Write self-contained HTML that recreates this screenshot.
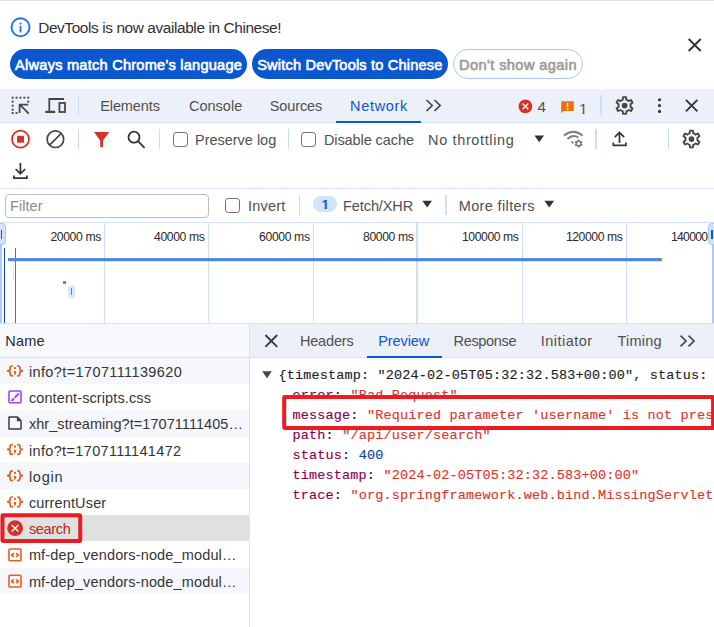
<!DOCTYPE html>
<html lang="en"><head><meta charset="utf-8"><title>DevTools - Network</title>
<style>
html,body{margin:0;padding:0;background:#fff;}
body{width:714px;height:627px;overflow:hidden;font-family:"Liberation Sans",sans-serif;}
#root{position:relative;width:714px;height:627px;overflow:hidden;background:#fff;}
#root>*{position:absolute;}
.t{white-space:pre;line-height:20px;display:block;}
.ln{background:#d3e3fd;}
.m{font-family:"Liberation Mono",monospace;font-size:13.5px;letter-spacing:0.15px;white-space:pre;line-height:20px;-webkit-text-stroke:0.15px;}
.k{color:#8e004b}.s{color:#dc362e}.n{color:#0842a0}.d{color:#1f1f1f}
.cb{box-sizing:border-box;border:1.6px solid #707070;border-radius:3.2px;background:#fff;}
svg{overflow:visible}

</style></head>
<body>
<div id="root">
<!-- ===== backgrounds & rules ===== -->
<div style="left:0;top:0;width:714px;height:1.2px;background:#dde0de"></div>
<div style="left:0;top:89px;width:714px;height:33px;background:#ecf0f8"></div>
<div class="ln" style="left:0;top:122px;width:714px;height:1px"></div>
<div class="ln" style="left:0;top:188px;width:714px;height:1px"></div>
<div class="ln" style="left:0;top:222px;width:714px;height:1px"></div>
<div class="ln" style="left:0;top:323px;width:714px;height:1px"></div>
<!-- infobar buttons -->
<div style="left:10px;top:49px;width:236.5px;height:30px;border-radius:15px;background:#0b57d0"></div>
<div style="left:252px;top:49px;width:196px;height:30px;border-radius:15px;background:#0b57d0"></div>
<div style="left:453px;top:49px;width:130px;height:30px;border-radius:15px;box-sizing:border-box;border:1px solid #a8c7fa;background:#fff"></div>
<!-- main tab underline -->
<div style="left:336px;top:120.9px;width:85px;height:2.1px;background:#0b58d6"></div>
<!-- toolbar dividers -->
<div style="left:78px;top:95.5px;width:1px;height:19px;background:#c7daf7"></div>
<div style="left:600px;top:95px;width:2px;height:19.5px;background:#cddefb"></div>
<div style="left:78px;top:129px;width:1px;height:19.5px;background:#c7daf7"></div>
<div style="left:159px;top:129px;width:1px;height:19.5px;background:#c7daf7"></div>
<div style="left:288px;top:129px;width:1px;height:19.5px;background:#c7daf7"></div>
<div style="left:595px;top:129px;width:2px;height:19.5px;background:#cddefb"></div>
<div style="left:668px;top:129px;width:1px;height:19.5px;background:#c7daf7"></div>
<div style="left:298.8px;top:195px;width:1.4px;height:19.5px;background:#c9dbf8"></div>
<div style="left:445px;top:195px;width:2px;height:19.5px;background:#cfdffb"></div>
<!-- checkboxes -->
<div class="cb" style="left:173.1px;top:131.9px;width:14.8px;height:14.9px"></div>
<div class="cb" style="left:301px;top:131.9px;width:14.8px;height:14.9px"></div>
<div class="cb" style="left:225px;top:197.9px;width:14.8px;height:14.9px"></div>
<!-- filter input -->
<div style="left:5px;top:193.5px;width:203.5px;height:24.5px;box-sizing:border-box;border:1px solid #bdbdbd;border-radius:4px;background:#fff"></div>
<!-- badge -->
<div style="left:313px;top:195.8px;width:24.2px;height:16.6px;border-radius:8.3px;background:#d3e3fd"></div>
<!-- ===== overview ===== -->
<div id="ov" style="left:0;top:223px;width:714px;height:100px;background:#fff"></div>
<div style="left:104px;top:223px;width:1px;height:100px;background:#cfdffb"></div>
<div style="left:208px;top:223px;width:1px;height:100px;background:#cfdffb"></div>
<div style="left:313px;top:223px;width:1px;height:100px;background:#cfdffb"></div>
<div style="left:416.4px;top:223px;width:1.7px;height:100px;background:#cfdffb"></div>
<div style="left:521.5px;top:223px;width:1px;height:100px;background:#cfdffb"></div>
<div style="left:625.5px;top:223px;width:1px;height:100px;background:#cfdffb"></div>
<div style="left:0;top:245px;width:1.8px;height:78px;background:#aecafa"></div>
<div style="left:-2px;top:223px;width:7.7px;height:22.3px;box-sizing:border-box;border:1px solid #a8c7fa;border-radius:0 3.5px 3.5px 0;background:#d3e3fd"></div>
<div style="left:0.8px;top:230px;width:1.4px;height:9px;background:#0b57d0"></div>
<div style="left:3.5px;top:248px;width:1.6px;height:75px;background:#12409a"></div>
<div style="left:15.2px;top:248px;width:1.3px;height:75px;background:#d1433c"></div>
<div style="left:12.5px;top:265px;width:1px;height:15px;background:#dbe6fb"></div>
<div style="left:63px;top:281px;width:3px;height:2.5px;background:#3eb35f"></div>
<div style="left:68px;top:286px;width:7px;height:12px;background:#dce8fc"></div>
<div style="left:70.5px;top:287.5px;width:1.5px;height:7.5px;background:#4a86e8"></div>
<div style="left:712px;top:245px;width:2px;height:78px;background:#aecafa"></div>
<div style="left:708px;top:223px;width:8px;height:22.3px;box-sizing:border-box;border:1px solid #a8c7fa;border-radius:3.5px 0 0 3.5px;background:#d3e3fd"></div>
<div style="left:710.8px;top:230px;width:2.2px;height:9px;background:#0b57d0"></div>
<!-- ===== request list ===== -->
<div style="left:0;top:324px;width:249px;height:33.5px;background:#f7f9fd"></div>
<div class="ln" style="left:0;top:357px;width:714px;height:1px"></div>
<div style="left:0;top:358px;width:249px;height:26px;background:#f5f7fc"></div>
<div style="left:0;top:410.2px;width:249px;height:26.4px;background:#f5f7fc"></div>
<div style="left:0;top:462.8px;width:249px;height:26px;background:#f5f7fc"></div>
<div style="left:0;top:515px;width:249px;height:26px;background:#dfe1e0"></div>
<div style="left:0;top:567.6px;width:249px;height:26px;background:#f5f7fc"></div>
<div class="ln" style="left:249px;top:324px;width:1px;height:303px"></div>
<!-- detail tab bar -->
<div style="left:250px;top:324px;width:464px;height:33px;background:#ecf0f8"></div>
<div style="left:367px;top:355.8px;width:74.8px;height:2.1px;background:#0b58d6"></div>
<!-- JSON preview -->
<div class="m d" style="left:278.4px;top:366.20px">{timestamp: "2024-02-05T05:32:32.583+00:00", status: 400, error: "Bad Request",</div>
<div class="m" style="left:292.6px;top:386.15px"><span class="k">error</span><span class="d">: </span><span class="s">"Bad Request"</span></div>
<div class="m" style="left:292.6px;top:406.10px"><span class="k">message</span><span class="d">: </span><span class="s">"Required parameter 'username' is not present"</span></div>
<div class="m" style="left:292.6px;top:426.05px"><span class="k">path</span><span class="d">: </span><span class="s">"/api/user/search"</span></div>
<div class="m" style="left:292.6px;top:446.00px"><span class="k">status</span><span class="d">: </span><span class="n">400</span></div>
<div class="m" style="left:292.6px;top:465.95px"><span class="k">timestamp</span><span class="d">: </span><span class="s">"2024-02-05T05:32:32.583+00:00"</span></div>
<div class="m" style="left:292.6px;top:485.90px"><span class="k">trace</span><span class="d">: </span><span class="s">"org.springframework.web.bind.MissingServletRequestParameterException</span></div>
<!-- ===== icons ===== -->
<svg width="714" height="627" viewBox="0 0 714 627" style="left:0;top:0" fill="none">
<!-- overview load line -->
<rect x="8" y="258.1" width="653.8" height="3.1" fill="#4a86e8"/>
<!-- info -->
<circle cx="20.5" cy="27.3" r="9.05" stroke="#1a6ff0" stroke-width="1.85"/>
<rect x="19.6" y="26" width="1.8" height="6.5" fill="#1a6ff0"/><rect x="19.6" y="22.6" width="1.8" height="1.9" fill="#1a6ff0"/>
<!-- infobar close -->
<path d="M688.7 39 L700.7 51 M700.7 39 L688.7 51" stroke="#333" stroke-width="1.9"/>
<!-- inspect -->
<rect x="11.7" y="96.7" width="1.9" height="1.9" fill="#474747"/><rect x="15.6" y="96.7" width="1.9" height="1.9" fill="#474747"/><rect x="19.5" y="96.7" width="1.9" height="1.9" fill="#474747"/><rect x="23.4" y="96.7" width="1.9" height="1.9" fill="#474747"/><rect x="27.3" y="96.7" width="1.9" height="1.9" fill="#474747"/><rect x="11.7" y="100.7" width="1.9" height="1.9" fill="#474747"/><rect x="11.7" y="104.7" width="1.9" height="1.9" fill="#474747"/><rect x="11.7" y="108.7" width="1.9" height="1.9" fill="#474747"/><rect x="11.7" y="112.1" width="1.9" height="1.9" fill="#474747"/><rect x="27.3" y="100.7" width="1.9" height="1.9" fill="#474747"/><rect x="15.6" y="112.1" width="1.9" height="1.9" fill="#474747"/>
<path d="M28.8 113.6 L20.3 105.1 M19.6 113 V104.7 H28.2" stroke="#474747" stroke-width="1.8"/>
<!-- device -->
<path d="M64 99 H49.3 V111.2" stroke="#474747" stroke-width="1.8"/>
<path d="M45.3 111.9 H55.2" stroke="#474747" stroke-width="2.2"/>
<rect x="59.4" y="103" width="5.6" height="9" stroke="#474747" stroke-width="1.8"/>
<!-- record -->
<circle cx="20.5" cy="139.2" r="8.5" stroke="#d93025" stroke-width="1.7"/>
<rect x="17" y="135.7" width="7" height="7" rx="0.8" fill="#d93025"/>
<!-- clear -->
<circle cx="55.4" cy="139.2" r="8.3" stroke="#474747" stroke-width="1.7"/>
<path d="M49.5 145.1 L61.3 133.3" stroke="#474747" stroke-width="1.7"/>
<!-- filter funnel -->
<path d="M94 132.1 H109.2 L103 140.5 V147 H100.2 V140.5 Z" fill="#d93025"/>
<!-- search -->
<circle cx="134" cy="137.2" r="5.5" stroke="#333" stroke-width="1.8"/>
<path d="M138 141.2 L144.6 147.8" stroke="#333" stroke-width="1.8"/>
<!-- tab overflow chevrons -->
<path d="M426.5 100 L432.2 105.5 L426.5 111 M434.5 100 L440.2 105.5 L434.5 111" stroke="#474747" stroke-width="1.7"/>
<!-- error count -->
<circle cx="525.4" cy="106.4" r="6.8" fill="#d93025"/>
<path d="M522.5 103.5 L528.3 109.3 M528.3 103.5 L522.5 109.3" stroke="#fff" stroke-width="1.3"/>
<!-- warning count -->
<path d="M562 101.3 H573 Q573.8 101.3 573.8 102.1 V110.2 Q573.8 111 573 111 H563.6 L561.2 113.3 V102.1 Q561.2 101.3 562 101.3 Z" fill="#e8710a"/>
<rect x="566.8" y="103" width="1.5" height="4" fill="#fff"/><rect x="566.8" y="108" width="1.5" height="1.5" fill="#fff"/>
<!-- gear 1 -->
<g transform="translate(613.4 94.4) scale(0.93)"><path fill="#474747" d="M19.43 12.98c.04-.32.07-.64.07-.98 0-.34-.03-.66-.07-.98l2.11-1.65c.19-.15.24-.42.12-.64l-2-3.46c-.09-.16-.26-.25-.44-.25-.06 0-.12.01-.17.03l-2.49 1c-.52-.4-1.08-.73-1.69-.98l-.38-2.65C14.46 2.18 14.25 2 14 2h-4c-.25 0-.46.18-.49.42l-.38 2.65c-.61.25-1.17.59-1.69.98l-2.49-1c-.06-.02-.12-.03-.18-.03-.17 0-.34.09-.43.25l-2 3.46c-.13.22-.07.49.12.64l2.11 1.65c-.04.32-.07.65-.07.98 0 .33.03.66.07.98l-2.11 1.65c-.19.15-.24.42-.12.64l2 3.46c.09.16.26.25.44.25.06 0 .12-.01.17-.03l2.49-1c.52.4 1.08.73 1.69.98l.38 2.65c.03.24.24.42.49.42h4c.25 0 .46-.18.49-.42l.38-2.65c.61-.25 1.17-.59 1.69-.98l2.49 1c.06.02.12.03.18.03.17 0 .34-.09.43-.25l2-3.46c.12-.22.07-.49-.12-.64l-2.11-1.65zm-1.98-1.71c.04.31.05.52.05.73 0 .21-.02.43-.05.73l-.14 1.13.89.7 1.08.84-.7 1.21-1.27-.51-1.04-.42-.9.68c-.43.32-.84.56-1.25.73l-1.06.43-.16 1.13-.2 1.35h-1.4l-.19-1.35-.16-1.13-1.06-.43c-.43-.18-.83-.41-1.23-.71l-.91-.7-1.06.43-1.27.51-.7-1.21 1.08-.84.89-.7-.14-1.13c-.03-.31-.05-.54-.05-.74s.02-.43.05-.73l.14-1.13-.89-.7-1.08-.84.7-1.21 1.27.51 1.04.42.9-.68c.43-.32.84-.56 1.25-.73l1.06-.43.16-1.13.2-1.35h1.39l.19 1.35.16 1.13 1.06.43c.43.18.83.41 1.23.71l.91.7 1.06-.43 1.27-.51.7 1.21-1.07.85-.89.7.14 1.13z"/><circle cx="12" cy="12" r="3.1" fill="#474747"/></g>
<!-- dots -->
<circle cx="659.5" cy="99.7" r="1.55" fill="#333"/><circle cx="659.5" cy="105.6" r="1.55" fill="#333"/><circle cx="659.5" cy="111.4" r="1.55" fill="#333"/>
<!-- devtools close -->
<path d="M685.9 99.9 L697.4 111.4 M697.4 99.9 L685.9 111.4" stroke="#383838" stroke-width="1.9"/>
<!-- throttle dropdown arrow -->
<path d="M534.5 135.6 H544 L539.25 142.2 Z" fill="#333"/>
<!-- wifi gear -->
<path d="M564 135.6 Q573.2 128 582.6 135.6" stroke="#7d7d7d" stroke-width="1.9"/>
<path d="M567.4 139 Q572.6 134 578.4 137.4" stroke="#7d7d7d" stroke-width="1.9"/>
<path d="M570.6 141.2 L573.6 141.6 L573.2 144.6 Z" fill="#7d7d7d"/>
<g stroke="#7d7d7d" stroke-width="2.4"><path d="M578.6 139.7 V147.5"/><path d="M575.2 141.65 L582 145.55"/><path d="M575.2 145.55 L582 141.65"/></g>
<circle cx="578.6" cy="143.6" r="2.9" fill="#7d7d7d"/><circle cx="578.6" cy="143.6" r="1.5" fill="#fff"/>
<!-- upload -->
<path d="M619.5 143 V132.6 M614.8 137.2 L619.5 132.4 L624.2 137.2" stroke="#333" stroke-width="1.7"/>
<path d="M613.3 142.6 V145.4 H625.9 V142.6" stroke="#333" stroke-width="1.7"/>
<!-- gear 2 -->
<g transform="translate(680.3 127.9) scale(0.93)"><path fill="#474747" d="M19.43 12.98c.04-.32.07-.64.07-.98 0-.34-.03-.66-.07-.98l2.11-1.65c.19-.15.24-.42.12-.64l-2-3.46c-.09-.16-.26-.25-.44-.25-.06 0-.12.01-.17.03l-2.49 1c-.52-.4-1.08-.73-1.69-.98l-.38-2.65C14.46 2.18 14.25 2 14 2h-4c-.25 0-.46.18-.49.42l-.38 2.65c-.61.25-1.17.59-1.69.98l-2.49-1c-.06-.02-.12-.03-.18-.03-.17 0-.34.09-.43.25l-2 3.46c-.13.22-.07.49.12.64l2.11 1.65c-.04.32-.07.65-.07.98 0 .33.03.66.07.98l-2.11 1.65c-.19.15-.24.42-.12.64l2 3.46c.09.16.26.25.44.25.06 0 .12-.01.17-.03l2.49-1c.52.4 1.08.73 1.69.98l.38 2.65c.03.24.24.42.49.42h4c.25 0 .46-.18.49-.42l.38-2.65c.61-.25 1.17-.59 1.69-.98l2.49 1c.06.02.12.03.18.03.17 0 .34-.09.43-.25l2-3.46c.12-.22.07-.49-.12-.64l-2.11-1.65zm-1.98-1.71c.04.31.05.52.05.73 0 .21-.02.43-.05.73l-.14 1.13.89.7 1.08.84-.7 1.21-1.27-.51-1.04-.42-.9.68c-.43.32-.84.56-1.25.73l-1.06.43-.16 1.13-.2 1.35h-1.4l-.19-1.35-.16-1.13-1.06-.43c-.43-.18-.83-.41-1.23-.71l-.91-.7-1.06.43-1.27.51-.7-1.21 1.08-.84.89-.7-.14-1.13c-.03-.31-.05-.54-.05-.74s.02-.43.05-.73l.14-1.13-.89-.7-1.08-.84.7-1.21 1.27.51 1.04.42.9-.68c.43-.32.84-.56 1.25-.73l1.06-.43.16-1.13.2-1.35h1.39l.19 1.35.16 1.13 1.06.43c.43.18.83.41 1.23.71l.91.7 1.06-.43 1.27-.51.7 1.21-1.07.85-.89.7.14 1.13z"/><circle cx="12" cy="12" r="3.1" fill="#474747"/></g>
<!-- download -->
<path d="M20.4 163 V173.6 M15.6 169 L20.4 173.8 L25.2 169" stroke="#333" stroke-width="1.7"/>
<path d="M13.9 175.4 V178.2 H26.9 V175.4" stroke="#333" stroke-width="1.7"/>
<!-- filter dropdown arrows -->
<path d="M422.3 200.8 H432 L427.15 207.4 Z" fill="#333"/>
<path d="M544.4 200.8 H554.1 L549.25 207.4 Z" fill="#333"/>
<!-- detail close -->
<path d="M265.4 335 L277.2 346.8 M277.2 335 L265.4 346.8" stroke="#3c3c3c" stroke-width="1.9"/>
<!-- detail overflow chevrons -->
<path d="M680.5 335.6 L686 341 L680.5 346.4 M688.5 335.6 L694 341 L688.5 346.4" stroke="#474747" stroke-width="1.7"/>
<!-- tree arrow -->
<path d="M262.2 371.3 H271.8 L267 378.2 Z" fill="#474747"/>
<!-- list icons: json -->
<g stroke="#e4611a" stroke-width="1.7" fill="none">
<path d="M12.9 366 H12.1 Q10.1 366 10.1 368 V369 Q10.1 370.9 7 370.9 Q10.1 370.9 10.1 372.8 V373.8 Q10.1 375.8 12.1 375.8 H12.9"/>
<path d="M17.1 366 H17.9 Q19.9 366 19.9 368 V369 Q19.9 370.9 23 370.9 Q19.9 370.9 19.9 372.8 V373.8 Q19.9 375.8 17.9 375.8 H17.1"/>
<circle cx="15" cy="368.1" r="1.15" fill="#e4611a" stroke="none"/>
<path d="M13.9 371.1 H16.2 V372.6 Q16 374.4 14.5 375.4 L13.9 374.8 Q14.5 374 14.5 373.3 H13.9 Z" fill="#e4611a" stroke="none"/>
</g>
<g stroke="#e4611a" stroke-width="1.7" fill="none" transform="translate(0 78.6)">
<path d="M12.9 366 H12.1 Q10.1 366 10.1 368 V369 Q10.1 370.9 7 370.9 Q10.1 370.9 10.1 372.8 V373.8 Q10.1 375.8 12.1 375.8 H12.9"/>
<path d="M17.1 366 H17.9 Q19.9 366 19.9 368 V369 Q19.9 370.9 23 370.9 Q19.9 370.9 19.9 372.8 V373.8 Q19.9 375.8 17.9 375.8 H17.1"/>
<circle cx="15" cy="368.1" r="1.15" fill="#e4611a" stroke="none"/>
<path d="M13.9 371.1 H16.2 V372.6 Q16 374.4 14.5 375.4 L13.9 374.8 Q14.5 374 14.5 373.3 H13.9 Z" fill="#e4611a" stroke="none"/>
</g><g stroke="#e4611a" stroke-width="1.7" fill="none" transform="translate(0 104.8)">
<path d="M12.9 366 H12.1 Q10.1 366 10.1 368 V369 Q10.1 370.9 7 370.9 Q10.1 370.9 10.1 372.8 V373.8 Q10.1 375.8 12.1 375.8 H12.9"/>
<path d="M17.1 366 H17.9 Q19.9 366 19.9 368 V369 Q19.9 370.9 23 370.9 Q19.9 370.9 19.9 372.8 V373.8 Q19.9 375.8 17.9 375.8 H17.1"/>
<circle cx="15" cy="368.1" r="1.15" fill="#e4611a" stroke="none"/>
<path d="M13.9 371.1 H16.2 V372.6 Q16 374.4 14.5 375.4 L13.9 374.8 Q14.5 374 14.5 373.3 H13.9 Z" fill="#e4611a" stroke="none"/>
</g><g stroke="#e4611a" stroke-width="1.7" fill="none" transform="translate(0 131)">
<path d="M12.9 366 H12.1 Q10.1 366 10.1 368 V369 Q10.1 370.9 7 370.9 Q10.1 370.9 10.1 372.8 V373.8 Q10.1 375.8 12.1 375.8 H12.9"/>
<path d="M17.1 366 H17.9 Q19.9 366 19.9 368 V369 Q19.9 370.9 23 370.9 Q19.9 370.9 19.9 372.8 V373.8 Q19.9 375.8 17.9 375.8 H17.1"/>
<circle cx="15" cy="368.1" r="1.15" fill="#e4611a" stroke="none"/>
<path d="M13.9 371.1 H16.2 V372.6 Q16 374.4 14.5 375.4 L13.9 374.8 Q14.5 374 14.5 373.3 H13.9 Z" fill="#e4611a" stroke="none"/>
</g>
<!-- css icon -->
<rect x="9" y="391" width="12" height="11.8" rx="1.1" stroke="#a142f4" stroke-width="1.6"/>
<path d="M18.5 393.9 L15.1 397.2" stroke="#a142f4" stroke-width="1.9" stroke-linecap="round"/>
<path d="M14.2 398.3 Q14.9 400.6 12.7 401.1 Q11.4 401.3 10.7 400.8 Q11.7 400.2 11.8 399.2 Q12.3 397.4 14.2 398.3 Z" fill="#a142f4"/>
<!-- document icon -->
<path d="M9 417.1 H17.4 L21 420.7 V428.9 H9 Z" stroke="#3c3c3c" stroke-width="1.5" stroke-linejoin="round"/>
<path d="M16.9 417.1 V421.2 H21 Z" fill="#3c3c3c"/>
<!-- search error icon -->
<circle cx="15.1" cy="528.2" r="7.9" fill="#d93025"/>
<path d="M11.8 524.9 L18.4 531.5 M18.4 524.9 L11.8 531.5" stroke="#fff" stroke-width="1.4"/>
<!-- script icons -->
<g stroke="#e5611f" fill="none">
<rect x="9" y="549" width="12" height="11.8" rx="1.1" stroke-width="1.6"/>
<path d="M13.9 553.1 L11.7 555 L13.9 556.9 M16.1 553.1 L18.3 555 L16.1 556.9" stroke-width="1.7"/>
</g>
<g stroke="#e5611f" fill="none" transform="translate(0 26.2)">
<rect x="9" y="549" width="12" height="11.8" rx="1.1" stroke-width="1.6"/>
<path d="M13.9 553.1 L11.7 555 L13.9 556.9 M16.1 553.1 L18.3 555 L16.1 556.9" stroke-width="1.7"/>
</g>
<!-- annotations -->
<rect x="2.5" y="515.3" width="77.7" height="25.6" rx="0.4" stroke="#ec1c24" stroke-width="4" stroke-linejoin="round"/>
<rect x="284.2" y="397.1" width="428.9" height="30.8" rx="0.4" stroke="#ec1c24" stroke-width="4" stroke-linejoin="round"/>
</svg>

<span class="t" style='left:38.20px;top:17.86px;font-size:15.4px;color:#303030;letter-spacing:-0.394px;'>DevTools is now available in Chinese!</span>
<span class="t" style='left:15.10px;top:54.54px;font-size:14.6px;color:#ffffff;letter-spacing:0.228px;-webkit-text-stroke:0.6px #fff;'>Always match Chrome&#x27;s language</span>
<span class="t" style='left:257.20px;top:54.54px;font-size:14.6px;color:#ffffff;letter-spacing:0.172px;-webkit-text-stroke:0.6px #fff;'>Switch DevTools to Chinese</span>
<span class="t" style='left:459.10px;top:54.54px;font-size:14.6px;color:#9a9a9a;letter-spacing:0.400px;-webkit-text-stroke:0.6px #9a9a9a;'>Don&#x27;t show again</span>
<span class="t" style='left:100.20px;top:95.88px;font-size:14.5px;color:#505050;letter-spacing:-0.093px;'>Elements</span>
<span class="t" style='left:189.00px;top:95.88px;font-size:14.5px;color:#505050;letter-spacing:-0.001px;'>Console</span>
<span class="t" style='left:269.80px;top:95.88px;font-size:14.5px;color:#505050;letter-spacing:-0.117px;'>Sources</span>
<span class="t" style='left:350.10px;top:95.88px;font-size:14.5px;color:#0b57d0;letter-spacing:0.669px;'>Network</span>
<span class="t" style='left:537.50px;top:96.53px;font-size:15.2px;color:#505050;letter-spacing:-0.053px;'>4</span>
<span class="t" style='left:579.10px;top:98.53px;font-size:15.2px;color:#505050;letter-spacing:-1.453px;clip-path:polygon(0 0,100% 0,100% 14.2px,5.4px 14.2px,5.4px 100%,3.3px 100%,3.3px 14.2px,0 14.2px);'>1</span>
<span class="t" style='left:195.00px;top:129.58px;font-size:14.5px;color:#505050;letter-spacing:-0.019px;'>Preserve log</span>
<span class="t" style='left:323.90px;top:129.58px;font-size:14.5px;color:#505050;letter-spacing:-0.082px;'>Disable cache</span>
<span class="t" style='left:428.10px;top:129.58px;font-size:14.5px;color:#505050;letter-spacing:0.626px;'>No throttling</span>
<span class="t" style='left:10.00px;top:195.68px;font-size:14.5px;color:#8a8a8a;letter-spacing:0.053px;'>Filter</span>
<span class="t" style='left:248.10px;top:195.68px;font-size:14.5px;color:#505050;letter-spacing:0.187px;'>Invert</span>
<span class="t" style='left:321.80px;top:194.90px;font-size:13px;color:#0b57d0;letter-spacing:-0.834px;font-weight:700;clip-path:polygon(0 0,100% 0,100% 12.3px,5.1px 12.3px,5.1px 100%,2.8px 100%,2.8px 12.3px,0 12.3px);'>1</span>
<span class="t" style='left:343.10px;top:195.68px;font-size:14.5px;color:#505050;letter-spacing:-0.103px;'>Fetch/XHR</span>
<span class="t" style='left:458.70px;top:195.68px;font-size:14.5px;color:#505050;letter-spacing:0.371px;'>More filters</span>
<span class="t" style='left:50.40px;top:226.97px;font-size:12.2px;color:#2a2a2a;letter-spacing:-0.376px;'>20000 ms</span>
<span class="t" style='left:154.00px;top:226.97px;font-size:12.2px;color:#2a2a2a;letter-spacing:-0.376px;'>40000 ms</span>
<span class="t" style='left:259.10px;top:226.97px;font-size:12.2px;color:#2a2a2a;letter-spacing:-0.376px;'>60000 ms</span>
<span class="t" style='left:363.00px;top:226.97px;font-size:12.2px;color:#2a2a2a;letter-spacing:-0.376px;'>80000 ms</span>
<span class="t" style='left:462.00px;top:226.97px;font-size:12.2px;color:#2a2a2a;letter-spacing:-0.427px;'>100000 ms</span>
<span class="t" style='left:565.90px;top:226.97px;font-size:12.2px;color:#2a2a2a;letter-spacing:-0.427px;'>120000 ms</span>
<span class="t" style='left:670.90px;top:226.97px;font-size:12.2px;color:#2a2a2a;letter-spacing:-0.694px;'>140000</span>
<span class="t" style='left:5.30px;top:330.78px;font-size:14.5px;color:#2a2a2a;letter-spacing:0.171px;'>Name</span>
<span class="t" style='left:28.90px;top:361.98px;font-size:14.5px;color:#353535;letter-spacing:0.387px;'>info?t=1707111139620</span>
<span class="t" style='left:28.90px;top:388.18px;font-size:14.5px;color:#353535;letter-spacing:0.107px;'>content-scripts.css</span>
<span class="t" style='left:28.90px;top:414.38px;font-size:14.5px;color:#353535;letter-spacing:0.062px;'>xhr_streaming?t=17071111405…</span>
<span class="t" style='left:28.90px;top:440.58px;font-size:14.5px;color:#353535;letter-spacing:0.355px;'>info?t=1707111141472</span>
<span class="t" style='left:28.90px;top:466.78px;font-size:14.5px;color:#353535;letter-spacing:0.740px;'>login</span>
<span class="t" style='left:28.90px;top:492.98px;font-size:14.5px;color:#353535;letter-spacing:0.155px;'>currentUser</span>
<span class="t" style='left:28.90px;top:519.18px;font-size:14.5px;color:#ba2520;letter-spacing:-0.326px;'>search</span>
<span class="t" style='left:28.90px;top:545.38px;font-size:14.5px;color:#353535;letter-spacing:0.147px;'>mf-dep_vendors-node_modul…</span>
<span class="t" style='left:28.90px;top:571.58px;font-size:14.5px;color:#353535;letter-spacing:0.147px;'>mf-dep_vendors-node_modul…</span>
<span class="t" style='left:299.90px;top:330.78px;font-size:14.5px;color:#505050;letter-spacing:-0.152px;'>Headers</span>
<span class="t" style='left:378.20px;top:330.78px;font-size:14.5px;color:#0b57d0;letter-spacing:-0.080px;'>Preview</span>
<span class="t" style='left:453.50px;top:330.78px;font-size:14.5px;color:#505050;letter-spacing:-0.328px;'>Response</span>
<span class="t" style='left:540.70px;top:330.78px;font-size:14.5px;color:#505050;letter-spacing:0.480px;'>Initiator</span>
<span class="t" style='left:617.40px;top:330.78px;font-size:14.5px;color:#505050;letter-spacing:0.263px;'>Timing</span>
</div>
</body></html>
